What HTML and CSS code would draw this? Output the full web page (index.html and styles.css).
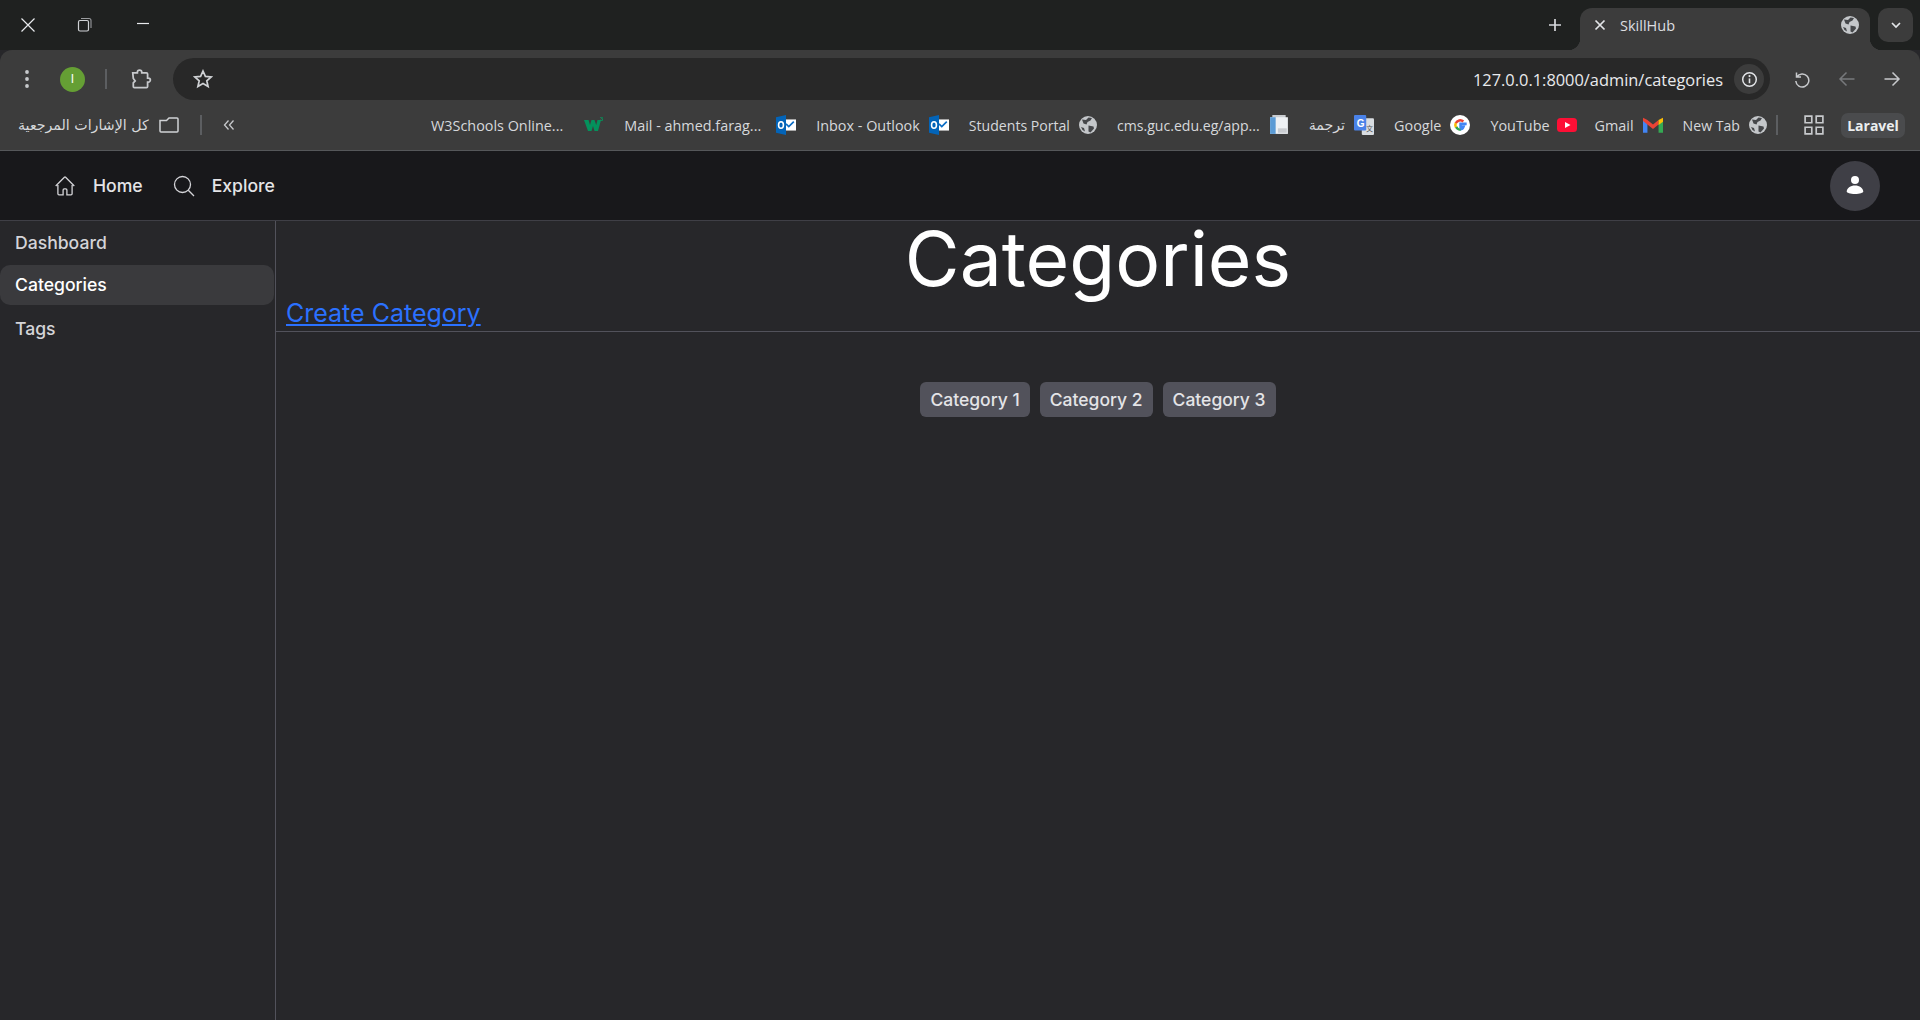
FILE: index.html
```html
<!doctype html>
<html lang="en">
<head>
<meta charset="UTF-8">
<title>SkillHub</title>
<link rel="stylesheet" href="styles.css">
</head>
<body>
<div class="tabstrip">
  <div class="winbtns">
    <svg class="w16" viewBox="0 0 16 16"><path d="M1.5 1.5l13 13M14.5 1.5l-13 13" stroke="#e8eaed" stroke-width="1.2" fill="none"/></svg>
    <svg class="w16" viewBox="0 0 16 16"><rect x="1.5" y="3.500" width="10" height="10.500" rx="1.500" stroke="#d0d2d5" stroke-width="1.2" fill="none"/><path d="M4 1.500h8a2 2 0 0 1 2 2V11" stroke="#9a9c9f" stroke-width="1.1" fill="none"/></svg>
    <svg class="w16" viewBox="0 0 16 16"><path d="M3 6.500h12" stroke="#e8eaed" stroke-width="1.2" fill="none"/></svg>
  </div>
  <div class="tabright">
    <svg class="plus" viewBox="0 0 14 14"><path d="M7 1v12M1 7h12" stroke="#d6d8db" stroke-width="1.7"/></svg>
    <div class="tab">
      <svg class="tabx" viewBox="0 0 12 12"><path d="M1.500 1.500l9 9M10.500 1.500l-9 9" stroke="#e3e5e8" stroke-width="1.700"/></svg>
      <span class="tabtitle">SkillHub</span>
      <svg class="globe" viewBox="0 0 18 18"><use href="#globe"/></svg>
    </div>
    <div class="tabmenu"><svg viewBox="0 0 12 12" class="chev"><path d="M2 4l4 4 4-4" stroke="#e3e5e8" stroke-width="1.700" fill="none"/></svg></div>
  </div>
</div>

<div class="toolbar">
  <div class="tool-left">
    <svg class="dots" viewBox="0 0 6 20"><circle cx="3" cy="3" r="1.900"/><circle cx="3" cy="10" r="1.900"/><circle cx="3" cy="17" r="1.900"/></svg>
    <span class="profile">I</span>
    <span class="sep"></span>
    <svg class="puzzle" viewBox="0 0 20 20"><path d="M2.500 4.500h4.200v-.6a2 2 0 0 1 4 0v.6h4.300a1 1 0 0 1 1 1v3.700h.7a1.800 1.800 0 0 1 0 3.600H16v4a1 1 0 0 1-1 1H4a1 1 0 0 1-1-1v-3.300l1.700-1.800-1.700-2.200z" stroke="#c7c9cc" stroke-width="1.600" fill="none"/></svg>
  </div>
  <div class="omnibox">
    <svg class="star" viewBox="0 0 20 20"><path d="M10 2l2.400 5.400 5.800.6-4.400 3.800 1.300 5.700L10 14.600l-5.100 2.900 1.300-5.700L1.800 8l5.800-.6z" stroke="#d0d2d5" stroke-width="1.700" fill="none"/></svg>
    <span class="url">127.0.0.1:8000/admin/categories</span>
    <span class="info"><svg viewBox="0 0 16 16"><circle cx="8" cy="8" r="6.400" stroke="#e3e5e8" stroke-width="1.400" fill="none"/><path d="M8 7v4.500" stroke="#e3e5e8" stroke-width="1.500"/><circle cx="8" cy="4.800" r="1" fill="#e3e5e8"/></svg></span>
  </div>
  <div class="tool-right">
    <svg class="nav" viewBox="0 0 18 18"><path d="M3.500 2.500v4.500H8M3.800 7A6.500 6.500 0 1 1 2.800 11" stroke="#c7c9cc" stroke-width="1.500" fill="none"/></svg>
    <svg class="nav" viewBox="0 0 18 18"><path d="M16.500 9H2M8.500 2.500L2 9l6.500 6.500" stroke="#77797c" stroke-width="1.500" fill="none"/></svg>
    <svg class="nav" viewBox="0 0 18 18"><path d="M1.500 9H16M9.500 2.500L16 9l-6.500 6.500" stroke="#c7c9cc" stroke-width="1.500" fill="none"/></svg>
  </div>
</div>

<div class="bookmarks">
  <div class="bm-left">
    <span class="bm all" dir="rtl"><svg class="ic" viewBox="0 0 20 16"><path d="M1 3.500v10.500a1 1 0 0 0 1 1h16a1 1 0 0 0 1-1V2a1 1 0 0 0-1-1H10L7.500 3.500zM1 3.500" stroke="#d0d2d5" stroke-width="1.500" fill="none"/></svg><span class="ar">كل الإشارات المرجعية</span></span>
    <span class="sep tall"></span>
    <svg class="dbl" viewBox="0 0 12 12"><path d="M5.500 1.500L1.500 6l4 4.500M10.500 1.500L6.500 6l4 4.500" stroke="#c7c9cc" stroke-width="1.300" fill="none"/></svg>
  </div>
  <div class="bm-list">
    <span class="bm w3gap">W3Schools Online...<svg class="ic" viewBox="0 0 20 20"><path d="M0 5h4.500l1.500 5 1.500-5h3l1.700 5 1.300-5H17l-3 11h-3.500L9 11l-1.500 5H4z" fill="#04915c"/><text x="16" y="6" class="w3">3</text></svg></span>
    <span class="bm mailgap">Mail - ahmed.farag...<svg class="ic" viewBox="0 0 18 18"><use href="#outlook"/></svg></span>
    <span class="bm">Inbox - Outlook<svg class="ic" viewBox="0 0 18 18"><use href="#outlook"/></svg></span>
    <span class="bm tight">Students Portal<svg class="ic sm" viewBox="0 0 18 18"><use href="#globe"/></svg></span>
    <span class="bm tight">cms.guc.edu.eg/app...<svg class="ic" viewBox="0 0 18 18"><rect x="3" y="0" width="12" height="12" fill="#c9ccd0"/><rect x="1" y="2" width="16" height="15" fill="#eef1f4"/><rect x="1" y="2" width="5" height="15" fill="#5b9bd5"/><path d="M8 12h8v4H8z" fill="#c9ccd0"/></svg></span>
    <span class="bm"><span class="ar">ترجمة</span><svg class="ic" viewBox="0 0 18 18"><rect x="7" y="3" width="11" height="15" rx="1" fill="#d9dde1"/><rect x="0" y="0" width="11" height="14" rx="1" fill="#4a82e8"/><text x="2.500" y="10.500" class="tg">G</text><text x="11" y="14" class="tz">文</text></svg></span>
    <span class="bm">Google<svg class="ic" viewBox="0 0 18 18"><circle cx="9" cy="9" r="9" fill="#fff"/><path d="M15 8H9.500v2.500h2.700A3.600 3.600 0 0 1 9 13" stroke="#4285f4" stroke-width="2.300" fill="none"/><path d="M9.500 13.200a4.200 4.200 0 0 1-4-2.700" stroke="#34a853" stroke-width="2.300" fill="none"/><path d="M5.300 11a4.400 4.400 0 0 1 0-4" stroke="#fbbc05" stroke-width="2.300" fill="none"/><path d="M5.300 7.200A4.300 4.300 0 0 1 12 5.800" stroke="#ea4335" stroke-width="2.300" fill="none"/></svg></span>
    <span class="bm yt">YouTube<svg class="ic" viewBox="0 0 20 20"><rect x="0" y="3" width="20" height="14" rx="3.500" fill="#fd0f35"/><path d="M8 7l5.500 3L8 13z" fill="#fff"/></svg></span>
    <span class="bm">Gmail<svg class="ic" viewBox="0 0 18 18"><path d="M0 4v12h4V7z" fill="#4285f4"/><path d="M14 7v9h4V4z" fill="#34a853"/><path d="M0 2.500L4 4.500l5 4 5-4V8.500l-5 4-9-7z" fill="#ea4335"/><path d="M14 4.500l4-2V6l-4 3z" fill="#fbbc05"/></svg></span>
    <span class="bm tight">New Tab<svg class="ic sm" viewBox="0 0 18 18"><use href="#globe"/></svg></span>
    <span class="sep tall"></span>
  </div>
  <div class="bm-end">
    <svg class="apps" viewBox="0 0 18 18"><path d="M1 1h6v6H1zM11 1h6v6h-6zM1 11h6v6H1zM11 11h6v6h-6z" stroke="#c7c9cc" stroke-width="1.500" fill="none"/></svg>
    <span class="group">Laravel</span>
  </div>
</div>

<header class="topnav">
  <nav class="topnav-links">
    <a class="toplink"><svg viewBox="0 0 24 24"><path d="M2.700 12L11.400 3.300a.9.9 0 0 1 1.200 0L21.300 12M4.900 9.800v9.900c0 .6.500 1.100 1.100 1.100h4.100v-4.900c0-.6.500-1.100 1.100-1.100h1.600c.6 0 1.100.5 1.100 1.100v4.900H18c.6 0 1.100-.5 1.100-1.100V9.800" stroke="#d4d4d8" stroke-width="1.300" fill="none"/></svg>Home</a>
    <a class="toplink"><svg viewBox="0 0 24 24"><circle cx="10.500" cy="10.500" r="8" stroke="#d4d4d8" stroke-width="1.300" fill="none"/><path d="M16.300 16.300L22 22" stroke="#d4d4d8" stroke-width="1.300"/></svg>Explore</a>
  </nav>
  <span class="avatar"><svg viewBox="0 0 20 20"><circle cx="10" cy="4" r="4" fill="#fff"/><path d="M1.700 15.800C1.700 12 5.500 9.500 10 9.500s8.300 2.500 8.300 6.300c0 .8-3.500 2.200-8.300 2.200s-8.300-1.400-8.300-2.200z" fill="#fff"/></svg></span>
</header>

<div class="layout">
  <aside class="sidebar">
    <a class="side-link">Dashboard</a>
    <a class="side-link active">Categories</a>
    <a class="side-link">Tags</a>
  </aside>
  <main class="content">
    <div class="page-head">
      <h1>Categories</h1>
      <a class="create" href="#">Create Category</a>
    </div>
    <div class="chips">
      <span class="chip">Category 1</span>
      <span class="chip">Category 2</span>
      <span class="chip">Category 3</span>
    </div>
  </main>
</div>

<svg class="defs" width="0" height="0">
  <symbol id="globe" viewBox="0 0 18 18">
    <circle cx="9" cy="9" r="9" fill="#c4c7ca"/>
    <path d="M3 3.500l4 .5 2.500-2.500L13 2l-1.500 2.500-3 1.500-1 2.500-3-1zM9.500 9.500l5 1 .5 2-3.500 4-2-1zM2 11l3 1 1 3.500L3.500 14z" fill="#45474a"/>
  </symbol>
  <symbol id="outlook" viewBox="0 0 18 18">
    <rect x="7" y="4" width="11" height="10" fill="#fff"/>
    <path d="M9 8l2.500 2.500L16 6" stroke="#0a6cc4" stroke-width="1.500" fill="none"/>
    <path d="M0 2l9-2v18l-9-2z" fill="#0364b8"/>
    <ellipse cx="4.500" cy="9" rx="2.200" ry="3" stroke="#fff" stroke-width="1.400" fill="none"/>
  </symbol>
</svg>
</body>
</html>
```
FILE: styles.css
```css
*{margin:0;padding:0;box-sizing:border-box;}
html,body{height:100%;}
body{width:1920px;height:1020px;overflow:hidden;background:#27272a;font-family:"Inter","Liberation Sans",sans-serif;display:flex;flex-direction:column;}
svg{display:block;flex:none;}
.defs{position:absolute;}

/* browser chrome */
.tabstrip{height:50px;background:#1f2120;display:flex;justify-content:space-between;flex:none;}
.winbtns{display:flex;gap:41px;padding:17px 0 0 20px;}
.w16{width:16px;height:16px;}
.tabright{display:flex;align-items:flex-start;padding-top:8px;padding-right:7px;}
.plus{width:14px;height:14px;margin:10px 18px 0 0;}
.tab{position:relative;width:290px;height:42px;background:#3c3c3c;border-radius:12px 12px 0 0;display:flex;align-items:center;padding:0 11px 8px 14px;font:14.5px "Open Sans","Liberation Sans",sans-serif;color:#dcdee1;}
.tab::before,.tab::after{content:"";position:absolute;bottom:0;width:12px;height:12px;}
.tab::before{left:-12px;background:radial-gradient(circle at 0 0,transparent 12px,#3c3c3c 12.5px);}
.tab::after{right:-12px;background:radial-gradient(circle at 100% 0,transparent 12px,#3c3c3c 12.5px);}
.tabx{width:12px;height:12px;margin-right:14px;}
.tabtitle{flex:1;}
.globe{width:18px;height:18px;}
.tabmenu{width:35px;height:34px;background:#3c3c3c;border-radius:10px;margin-left:8px;display:flex;align-items:center;justify-content:center;}
.chev{width:12px;height:12px;}
.toolbar{height:58px;background:#3c3c3c;border-radius:12px 12px 0 0;display:flex;align-items:center;flex:none;}
.tool-left{display:flex;align-items:center;width:173px;flex:none;}
.dots{width:6px;height:20px;fill:#c7c9cc;margin:0 0 0 24px;}
.profile{width:25px;height:25px;border-radius:50%;background:#659f34;color:#fff;font:12px "Liberation Sans",sans-serif;display:flex;align-items:center;justify-content:center;margin-left:30px;}
.sep{width:2px;height:20px;background:#5c5e61;margin-left:20px;flex:none;}
.puzzle{width:22px;height:22px;margin-left:23px;}
.omnibox{width:1597px;height:42px;background:#282828;border-radius:21px;display:flex;align-items:center;padding:0 6px 0 20px;}
.star{width:20px;height:20px;}
.url{flex:1;text-align:right;font:16.4px "Open Sans","Liberation Sans",sans-serif;color:#e8eaed;padding-right:11px;}
.info{width:30px;height:30px;border-radius:50%;background:#3c3c3c;display:flex;align-items:center;justify-content:center;}
.info svg{width:17px;height:17px;}
.tool-right{display:flex;gap:27px;padding-left:23px;}
.nav{width:18px;height:18px;}
.bookmarks{height:43px;background:#3c3c3c;border-bottom:1px solid #55575a;display:flex;align-items:center;flex:none;font:14.4px "Open Sans","Liberation Sans",sans-serif;color:#d6d8db;padding-bottom:8px;}
.bm-left{display:flex;align-items:center;width:431px;flex:none;padding-left:18px;}
.bm{display:flex;align-items:center;gap:9px;white-space:nowrap;}
.bm.all{gap:10px;}
.bm.w3gap{gap:21px;}
.bm.mailgap{gap:15px;}
.bm.tight{font-size:14.1px;}
.bm.yt{gap:7px;margin-right:-2px;}
.ic{width:20px;height:20px;}
.ic.sm{width:18px;height:18px;}
.ar{font-family:"DejaVu Sans","Noto Sans",sans-serif;font-size:14.2px;}
.sep.tall{height:20px;margin-left:21px;}
.dbl{width:12px;height:12px;margin-left:21px;}
.bm-list{display:flex;align-items:center;gap:20px;flex:1;}
.bm-list .sep.tall{margin-left:-11px;}
.bm-end{display:flex;align-items:center;gap:17px;padding-right:15px;}
.apps{width:20px;height:20px;}
.group{height:25px;width:64px;background:#4a4b4d;border-radius:7px;display:flex;align-items:center;justify-content:center;font-weight:700;font-size:14px;color:#eceef0;}
.tg{font:700 9px "Liberation Sans",sans-serif;fill:#fff;}
.tz{font:6px "Noto Sans CJK SC",sans-serif;fill:#555;}
.w3{font:700 6px "Liberation Sans",sans-serif;fill:#04915c;}

/* app nav */
.topnav{height:70px;background:#18181b;border-bottom:1px solid #3f3f46;display:flex;align-items:center;justify-content:space-between;padding:0 40px 0 53px;flex:none;}
.topnav-links{display:flex;gap:29px;}
.toplink{display:flex;align-items:center;gap:16px;color:#e4e4e7;font-size:17.6px;font-weight:500;}
.toplink svg{width:24px;height:24px;}
.avatar{width:50px;height:50px;border-radius:50%;background:#3f3f46;display:flex;align-items:center;justify-content:center;}
.avatar svg{width:20px;height:20px;}

/* page */
.layout{flex:1;display:flex;}
.sidebar{width:276px;flex:none;border-right:1px solid #52525b;display:flex;flex-direction:column;gap:3px;padding-top:1px;}
.side-link{height:40px;margin-right:1px;padding-left:15px;border-radius:10px;display:flex;align-items:center;color:#d4d4d8;font-size:17.6px;font-weight:500;}
.side-link.active{background:#3a3a3d;color:#fff;padding-bottom:1px;}
.content{flex:1;}
.page-head{border-bottom:1px solid #52525b;padding:0 10px;height:111px;display:flex;flex-direction:column;}
h1{font-size:75px;line-height:72px;font-weight:400;color:#fff;text-align:center;height:72px;margin-top:2px;}
.create{font-size:25px;line-height:32px;color:#2b71ff;margin-top:2px;}
.chips{display:flex;justify-content:center;gap:10px;margin-top:50px;}
.chip{height:35px;padding:0 10px;background:#52525b;border-radius:6px;display:flex;align-items:center;color:#e4e4e7;font-size:17.5px;font-weight:500;}
```
